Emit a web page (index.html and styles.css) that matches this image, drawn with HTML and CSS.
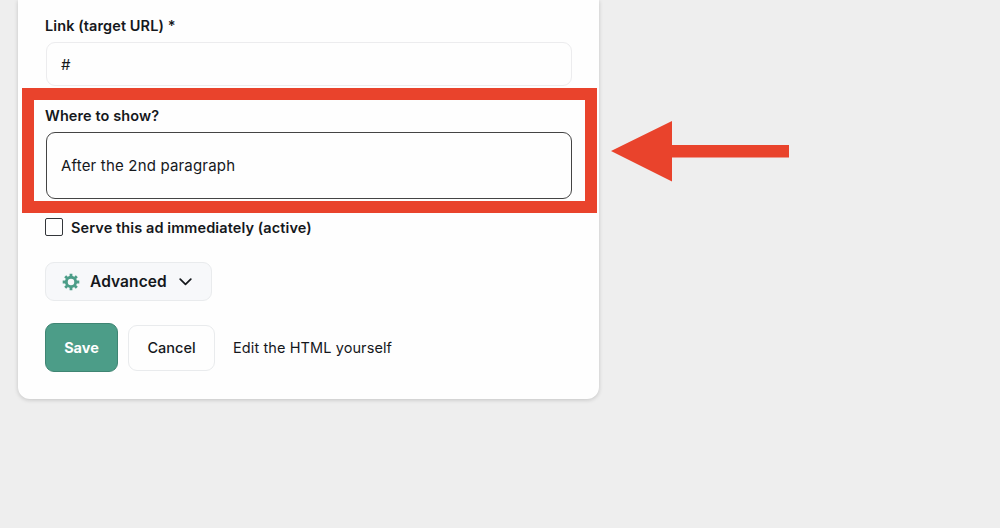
FILE: index.html
```html
<!DOCTYPE html>
<html lang="en">
<head>
    <meta charset="UTF-8">
    <meta name="viewport" content="width=device-width, initial-scale=1.0">
    <title>Edit ad</title>
    <link rel="stylesheet" href="styles.css">
</head>
<body>

<form class="card">
    <div class="field">
        <label for="target">Link (target URL) *</label>
        <input class="control" type="text" id="target" value="#">
    </div>

    <!-- Placement, marked with frame and arrow -->
    <div class="field placement">
        <label>Where to show?</label>
        <div class="control select">After the 2nd paragraph</div>
        <div class="highlight"></div>
        <svg class="arrow" width="178" height="62" viewBox="0 0 178 62">
            <path d="M0 31 L61 1 V25 H178 V37.500 H61 V61.500 Z" fill="#e9432c"/>
        </svg>
    </div>

    <label class="check">
        <input type="checkbox">
        <span>Serve this ad immediately (active)</span>
    </label>

    <button type="button" class="advanced">
        <svg class="gear" width="18" height="18" viewBox="0 0 18 18" fill="none" stroke="#4c9d88">
            <circle cx="9" cy="9" r="4.700" stroke-width="2.900"/>
            <path stroke-width="2.800" d="M9 .7v3M9 14.300v3M.7 9h3M14.300 9h3M3.200 3.200l2 2M12.800 12.800l2 2M3.200 14.800l2-2M12.800 5.200l2-2"/>
        </svg>
        <span>Advanced</span>
        <svg class="chevron" width="13" height="8" viewBox="0 0 13 8" fill="none" stroke="#15181c" stroke-width="1.700" stroke-linecap="round" stroke-linejoin="round">
            <path d="M1.200 1.200 L6.500 6.400 L11.800 1.200"/>
        </svg>
    </button>

    <div class="actions">
        <button type="button" class="save">Save</button>
        <button type="button" class="cancel">Cancel</button>
        <a class="edit">Edit the HTML yourself</a>
    </div>
</form>

</body>
</html>
```
FILE: styles.css
```css
* {
    margin: 0;
    padding: 0;
    box-sizing: border-box;
}

body {
    font-family: 'Inter', sans-serif;
    font-size: 14.5px;
    line-height: 20px;
    letter-spacing: 0.1px;
    background-color: #eeeeee;
    color: #15181c;
    height: 100vh;
    overflow: hidden;
}

button, input {
    font: inherit;
    letter-spacing: inherit;
    color: inherit;
}

.card {
    width: 581px;
    height: 399px;
    margin-left: 18px;
    padding: 16px 26px 0 27px;
    background-color: #fefefe;
    border-radius: 0 0 12px 12px;
    box-shadow: 0 1px 4px rgba(0, 0, 0, 0.18);
}

/* Fields */
.field label {
    display: block;
    margin-bottom: 6px;
    font-weight: 600;
}

.control {
    display: flex;
    align-items: center;
    width: 526px;
    height: 44px;
    margin-left: 1px;
    padding: 0 14px;
    border: 1px solid #ececee;
    border-radius: 9px;
    background-color: #fefefe;
    font-size: 15px;
    letter-spacing: 0.18px;
}

.placement {
    position: relative;
    margin-top: 20px;
}

.select {
    height: 67px;
    border-color: #444444;
}

/* Frame and arrow over the placement field */
.highlight {
    position: absolute;
    left: -23px;
    top: -18px;
    width: 575px;
    height: 125px;
    border: 12px solid #e9432c;
}

.arrow {
    position: absolute;
    left: 566px;
    top: 14px;
}

/* Active checkbox */
.check {
    display: flex;
    align-items: center;
    margin-top: 18px;
    font-weight: 600;
}

.check input {
    appearance: none;
    width: 18px;
    height: 18px;
    margin: 0 8px 1px 0;
    border: 1px solid #33363a;
    border-radius: 2px;
}

.check span {
    padding-top: 2px;
    line-height: 18px;
}

/* Buttons */
.advanced {
    display: flex;
    align-items: center;
    width: 167px;
    height: 39px;
    margin-top: 25px;
    padding-left: 16px;
    border: 1px solid #e9ebed;
    border-radius: 9px;
    background-color: #f7f8fa;
    font-size: 15.5px;
    font-weight: 600;
}

.advanced span {
    padding-top: 1px;
}

.gear {
    margin-right: 10px;
}

.chevron {
    margin-left: 12px;
}

.actions {
    display: flex;
    align-items: center;
    margin-top: 22px;
}

.save {
    width: 73px;
    height: 49px;
    border: 1px solid #3f8573;
    border-radius: 9px;
    background-color: #4c9d88;
    color: #fefefe;
    font-weight: 700;
    letter-spacing: 0;
}

.cancel {
    width: 87px;
    height: 46px;
    margin: 0 18px 0 10px;
    border: 1px solid #e9ebed;
    border-radius: 9px;
    background-color: #fefefe;
    font-weight: 500;
    letter-spacing: 0;
}
```
